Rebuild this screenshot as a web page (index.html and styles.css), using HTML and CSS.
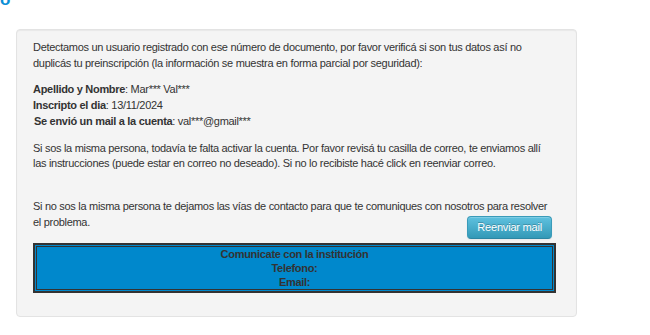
FILE: index.html
```html
<!DOCTYPE html>
<html lang="es">
<head>
<meta charset="utf-8">
<title>Preinscripción</title>
<link rel="stylesheet" href="styles.css">
</head>
<body>
<div class="page-title"><span class="page-title-text">o</span></div>
<div class="container">
  <div class="well">
    <p>Detectamos un usuario registrado con ese número de documento, por favor verificá si son tus datos así no duplicás tu preinscripción (la información se muestra en forma parcial por seguridad):</p>
    <p><b>Apellido y Nombre</b>: Mar*** Val***<br>
    <b>Inscripto el dia</b>: 13/11/2024<br>
    <span class="indent"><b>Se envió un mail a la cuenta</b>: val***@gmail***</span></p>
    <p>Si sos la misma persona, todavía te falta activar la cuenta. Por favor revisá tu casilla de correo, te enviamos allí las instrucciones (puede estar en correo no deseado). Si no lo recibiste hacé click en reenviar correo.</p>
    <p class="spaced">Si no sos la misma persona te dejamos las vías de contacto para que te comuniques con nosotros para resolver el problema. <button class="btn-info" type="button">Reenviar mail</button></p>
    <div class="contact">
      <div class="contact-inner">
        <div>Comunicate con la institución</div>
        <div>Telefono:</div>
        <div>Email:</div>
      </div>
    </div>
  </div>
</div>
</body>
</html>
```
FILE: styles.css
```css
html, body {
  margin: 0;
  padding: 0;
  background: #ffffff;
}
body {
  font-family: "Liberation Sans", Arial, sans-serif;
  font-size: 11px;
  line-height: 1.428571;
  letter-spacing: -0.3px;
  color: #333333;
}
.page-title {
  height: 10px;
  overflow: hidden;
}
.page-title-text {
  display: block;
  margin-top: -10px;
  font-size: 17px;
  line-height: 20px;
  font-weight: bold;
  color: #0a8fd6;
}
.container {
  padding: 19px 0 0 16px;
}
.well {
  width: 523px;
  padding: 10px 20px 23px 16px;
  background: #f4f4f4;
  border: 1px solid #e3e3e3;
  border-radius: 4px;
  box-shadow: inset 0 1px 1px rgba(0, 0, 0, 0.05);
}
.well p {
  margin: 0 0 11px;
}
.well p.spaced {
  margin-top: 27px;
}
.indent {
  padding-left: 1px;
}
.btn-info {
  float: right;
  margin: 1px 4px 0 0;
  height: 23px;
  padding: 0 9px;
  font-family: "Liberation Sans", Arial, sans-serif;
  font-size: 11px;
  letter-spacing: -0.2px;
  color: #ffffff;
  text-shadow: 0 -1px 0 rgba(0, 0, 0, 0.25);
  background-image: linear-gradient(to bottom, #5fc1df, #3399b7);
  border: 1px solid #3a9bb9;
  border-bottom-color: #2c86a3;
  border-radius: 4px;
  box-shadow: inset 0 1px 0 rgba(255, 255, 255, 0.2), 0 1px 2px rgba(0, 0, 0, 0.05);
}
.contact {
  clear: both;
  margin-top: 13px;
  border: 2px solid #333333;
  padding: 1px;
  background: #0088cc;
}
.contact-inner {
  border: 1px solid #333333;
  text-align: center;
  font-weight: bold;
  font-size: 11px;
  line-height: 14px;
  color: #333333;
}
```
